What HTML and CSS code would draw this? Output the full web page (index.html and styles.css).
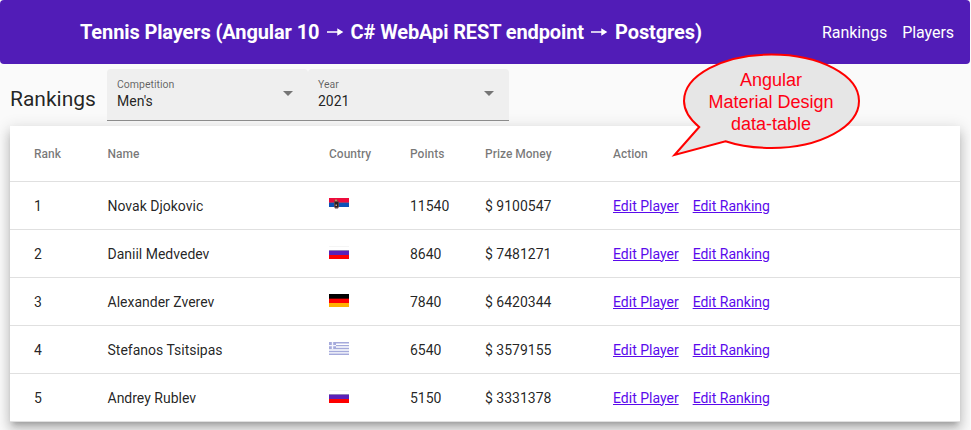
FILE: index.html
```html
<!DOCTYPE html>
<html lang="en">
<head>
<meta charset="utf-8">
<title>Tennis Players</title>
<link rel="stylesheet" href="styles.css">
</head>
<body>
<svg width="0" height="0" class="defs" aria-hidden="true">
  <symbol id="rs" viewBox="0 0 20 13">
    <path fill="#fff" d="M0 0h20v13H0z"/><path fill="#ed0b3c" d="M0 0h20v4H0z"/><path fill="#963d70" d="M0 4h20v1H0z"/><path fill="#0b51b8" d="M0 5h20v4H0z"/>
    <path fill="#a3393c" d="M5 2h4v7H5z"/><path fill="#5f4245" d="M5 3.5h5v5l-1 2H6l-1-2z"/><path fill="#222" d="M6 4h3v5H6z"/><path fill="#c5a39c" d="M6.5 6.5h1.5v1.5H6.500z"/><path fill="#b9925d" d="M6 1.500h2v1.500H6z"/>
  </symbol>
  <symbol id="ru" viewBox="0 0 20 13">
    <path fill="#fff" d="M0 0h20v13H0z"/><path fill="#f5f5f5" d="M0 0h20v1H0z"/><path fill="#9080b8" d="M0 4h20v1H0z"/><path fill="#5a20b8" d="M0 5h20v4H0z"/><path fill="#fe0000" d="M0 9h20v4H0z"/>
  </symbol>
  <symbol id="de" viewBox="0 0 20 13">
    <path d="M0 0h20v4H0z"/><path fill="#550000" d="M0 4h20v1H0z"/><path fill="#fe0000" d="M0 5h20v4H0z"/><path fill="#ffb100" d="M0 9h20v4H0z"/>
  </symbol>
  <symbol id="gr" viewBox="0 0 20 13">
    <path fill="#fff" d="M0 0h20v13H0z"/><path stroke="#a5aadb" stroke-width="1.45" d="M0 .7h20M0 3.600h20M0 6.500h20M0 9.400h20M0 12.300h20"/><path fill="#a5aadb" d="M0 0h7v7H0z"/><path fill="#f5f5ff" d="M2.800 0h1.400v7H2.800zM0 2.900h7v1.400H0z"/>
  </symbol>
</svg>
<header class="toolbar">
  <h1 class="title">Tennis Players (Angular 10 <svg class="arrow" viewBox="0 0 18 12"><path d="M1 5h14M12 2.500l4 2.500-4 2.500z"/></svg> C# WebApi REST endpoint <svg class="arrow" viewBox="0 0 18 12"><path d="M1 5h14M12 2.500l4 2.500-4 2.500z"/></svg> Postgres)</h1>
  <nav class="nav"><span>Rankings</span><span>Players</span></nav>
</header>
<section class="filters">
  <h2 class="heading">Rankings</h2>
  <div class="field"><div class="label">Competition</div><div class="value">Men's</div><i class="caret"></i></div>
  <div class="field"><div class="label">Year</div><div class="value">2021</div><i class="caret"></i></div>
</section>
<main class="table">
  <div class="row head"><span>Rank</span><span>Name</span><span>Country</span><span>Points</span><span>Prize Money</span><span>Action</span></div>
  <div class="row"><span>1</span><span>Novak Djokovic</span><svg class="flag"><use href="#rs"/></svg><span>11540</span><span>$ 9100547</span><span class="actions"><a href="#">Edit Player</a><a href="#">Edit Ranking</a></span></div>
  <div class="row"><span>2</span><span>Daniil Medvedev</span><svg class="flag"><use href="#ru"/></svg><span>8640</span><span>$ 7481271</span><span class="actions"><a href="#">Edit Player</a><a href="#">Edit Ranking</a></span></div>
  <div class="row"><span>3</span><span>Alexander Zverev</span><svg class="flag"><use href="#de"/></svg><span>7840</span><span>$ 6420344</span><span class="actions"><a href="#">Edit Player</a><a href="#">Edit Ranking</a></span></div>
  <div class="row"><span>4</span><span>Stefanos Tsitsipas</span><svg class="flag"><use href="#gr"/></svg><span>6540</span><span>$ 3579155</span><span class="actions"><a href="#">Edit Player</a><a href="#">Edit Ranking</a></span></div>
  <div class="row"><span>5</span><span>Andrey Rublev</span><svg class="flag"><use href="#ru"/></svg><span>5150</span><span>$ 3331378</span><span class="actions"><a href="#">Edit Player</a><a href="#">Edit Ranking</a></span></div>
</main>
<aside class="callout">
  <svg class="bubble" viewBox="0 0 192 106"><path d="M31.200 75C21.500 67 16 58.500 16 49C16 23.300 55 2.500 103.500 2.500S191 23.300 191 49S152 96 103.500 96C86.500 96 70 93.500 57.500 89.300L6.500 103Z"/></svg>
  <p class="callout-text">Angular<br>Material Design<br>data-table</p>
</aside>
</body>
</html>
```
FILE: styles.css
```css
body {
  margin: 0;
  width: 970px;
  height: 430px;
  overflow: hidden;
  background: #fafafa;
  color: rgba(0, 0, 0, .87);
  font-family: Roboto, sans-serif;
}
.defs { position: absolute; }
.toolbar {
  box-sizing: border-box;
  display: flex;
  align-items: center;
  justify-content: space-between;
  height: 64px;
  padding: 0 16px 0 80px;
  border-radius: 4px;
  background: #511cb7;
  color: #fff;
}
.title { margin: 0; font-size: 20px; font-weight: 700; line-height: 32px; letter-spacing: -.12px; white-space: nowrap; }
.arrow { width: 18px; height: 12px; margin: 0 2px 0 1.500px; fill: #fff; stroke: #fff; stroke-width: 1.4; }
.nav { display: flex; gap: 15px; padding-top: 1px; font-size: 16px; line-height: 24px; letter-spacing: -.05px; }
.filters { display: flex; height: 57px; padding-top: 5px; }
.heading { margin: 0; width: 97px; padding-left: 10px; font-size: 21px; font-weight: 400; line-height: 60px; }
.field {
  position: relative;
  box-sizing: border-box;
  width: 201px;
  height: 52px;
  padding: 9px 10px 0;
  border-bottom: 1px solid #8c8c8c;
  border-radius: 4px 4px 0 0;
  background: #efefef;
}
.label { font-size: 10.5px; line-height: 13px; color: rgba(0, 0, 0, .6); }
.value { margin-top: 2px; font-size: 14px; line-height: 16px; }
.caret {
  position: absolute;
  right: 15px;
  top: 22px;
  border: 5px solid transparent;
  border-top-color: #757575;
  border-bottom: 0;
}
.table {
  margin: 0 10px;
  background: #fff;
  box-shadow: 0 5px 5px -3px rgba(0, 0, 0, .2), 0 8px 10px 1px rgba(0, 0, 0, .14), 0 3px 14px 2px rgba(0, 0, 0, .12);
}
.row {
  box-sizing: border-box;
  display: grid;
  grid-template-columns: 73.500px 221.500px 81px 75px 128px 1fr;
  align-items: center;
  height: 48px;
  padding-left: 24px;
  border-bottom: 1px solid #e0e0e0;
  font-size: 14px;
  line-height: 20px;
}
.head { height: 56px; color: rgba(0, 0, 0, .54); font-size: 12px; font-weight: 500; }
.flag { width: 20px; height: 13px; margin-bottom: 2px; }
.actions { display: flex; gap: 14px; }
.actions a { color: #5a0aec; }
.callout { position: absolute; left: 668px; top: 52px; width: 192px; height: 106px; }
.bubble { display: block; width: 192px; height: 106px; }
.bubble path { fill: #e6e6e6; stroke: #f00; stroke-width: 2; }
.callout-text {
  position: absolute;
  left: 16px;
  top: 17px;
  width: 174px;
  margin: 0;
  color: #ff0014;
  font: 18px/22px "Liberation Sans", sans-serif;
  text-align: center;
}
```
